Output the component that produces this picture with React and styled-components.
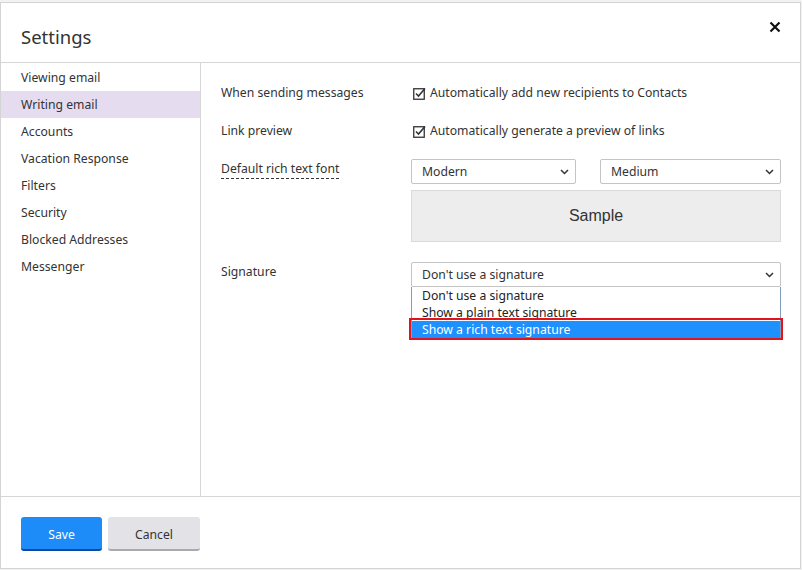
import React from "react";
import styled, { createGlobalStyle } from "styled-components";

const Global = createGlobalStyle`
  html, body { margin: 0; padding: 0; background: #f2f2f2; }
  body { font-family: "Noto Sans", "Open Sans", sans-serif; color: #333; }
  * { box-sizing: border-box; }
`;

const Dialog = styled.div`
  margin: 2px 0 0 0;
  width: 801px;
  height: 567px;
  background: #fff;
  border: 1px solid #d4d4d4;
  display: flex;
  flex-direction: column;
`;

const Header = styled.div`
  height: 60px;
  flex: none;
  display: flex;
  align-items: center;
  justify-content: space-between;
  padding: 0 15px 0 20px;
  border-bottom: 1px solid #d6d6d6;
`;

const Title = styled.h1`
  margin: 0;
  font-size: 18.5px;
  font-weight: 400;
  color: #333;
  padding-top: 7px;
`;

const Close = styled.button`
  border: 0;
  background: none;
  padding: 0;
  width: 20px;
  height: 20px;
  display: flex;
  align-items: center;
  justify-content: center;
  margin-top: -12px;
`;

const Body = styled.div`
  flex: 1;
  display: flex;
  min-height: 0;
`;

const Sidebar = styled.nav`
  width: 200px;
  flex: none;
  border-right: 1px solid #d6d6d6;
  padding-top: 1px;
`;

const NavItem = styled.div`
  height: 27px;
  line-height: 27px;
  padding-left: 20px;
  font-size: 12.2px;
  color: #333;
  background: ${(p) => (p.$active ? "#e6dcf0" : "transparent")};
`;

const Content = styled.div`
  flex: 1;
  padding: 20px 19px 0 20px;
  display: grid;
  grid-template-columns: 190px 370px;
  grid-auto-rows: min-content;
  align-content: start;
`;

const Label = styled.div`
  font-size: 12.2px;
  color: #333;
  line-height: 20px;
`;

const Dashed = styled.span`
  border-bottom: 1px dashed #333;
  padding-bottom: 1px;
`;

const Field = styled.div`
  padding-bottom: ${(p) => p.$pb || 0}px;
`;

const Check = styled.label`
  display: flex;
  align-items: center;
  gap: 4px;
  font-size: 12.2px;
  line-height: 20px;
  color: #333;
  padding-left: 2px;
`;

const SelectRow = styled.div`
  display: grid;
  grid-template-columns: 165px 181px;
  column-gap: 24px;
`;

const Select = styled.div`
  height: 25px;
  border: 1px solid #c4c4c4;
  border-radius: 2px;
  display: flex;
  align-items: center;
  justify-content: space-between;
  padding: 0 6px 0 10px;
  font-size: 12.2px;
  color: #333;
  background: #fff;
`;

const Sample = styled.div`
  margin-top: 6px;
  height: 52px;
  background: #ededed;
  border: 1px solid #dadada;
  display: flex;
  align-items: center;
  justify-content: center;
  font-family: "Liberation Sans", Arial, sans-serif;
  font-size: 16px;
  color: #333;
`;

const DropWrap = styled.div`
  position: relative;
`;

const List = styled.div`
  position: absolute;
  left: 0;
  right: 0;
  top: 25px;
  border: 1px solid #7f9db9;
  border-top: 0;
  background: #fff;
`;

const Option = styled.div`
  height: 17px;
  line-height: 17px;
  padding-left: 10px;
  font-size: 12.2px;
  color: ${(p) => (p.$sel ? "#fff" : "#222")};
  background: ${(p) => (p.$sel ? "#1e90ff" : "transparent")};
  position: relative;
`;

const Highlight = styled.div`
  position: absolute;
  left: -3px;
  right: -3px;
  top: -3px;
  bottom: -2px;
  border: 2px solid #e0141e;
  pointer-events: none;
`;

const Footer = styled.div`
  height: 72px;
  flex: none;
  border-top: 1px solid #d6d6d6;
  display: flex;
  align-items: center;
  gap: 6px;
  padding: 3px 0 0 20px;
`;

const Button = styled.button`
  height: 34px;
  width: ${(p) => p.$w}px;
  border: 0;
  border-radius: 3px;
  border-bottom: 2px solid ${(p) => (p.$primary ? "#0b4aa0" : "#a9a9b0")};
  background: ${(p) => (p.$primary ? "#1d8cf8" : "#e2e2e7")};
  color: ${(p) => (p.$primary ? "#fff" : "#333")};
  font-family: "Noto Sans", "Open Sans", sans-serif;
  font-size: 12.2px;
  padding: 2px 0 0;
`;

const Chevron = () => (
  <svg width="9" height="6" viewBox="0 0 9 6">
    <path d="M1 1l3.5 3.5L8 1" fill="none" stroke="#333" strokeWidth="1.5" />
  </svg>
);

const CheckIcon = () => (
  <svg width="13" height="13" viewBox="0 0 13 13">
    <rect x="0.75" y="1.75" width="10.5" height="10.5" fill="none" stroke="#333" strokeWidth="1.3" />
    <path d="M3 6.5l2.5 2.5L12 1.5" fill="none" stroke="#333" strokeWidth="1.6" />
  </svg>
);

export default function App() {
  const nav = [
    "Viewing email",
    "Writing email",
    "Accounts",
    "Vacation Response",
    "Filters",
    "Security",
    "Blocked Addresses",
    "Messenger",
  ];
  return (
    <>
      <Global />
      <Dialog>
        <Header>
          <Title>Settings</Title>
          <Close aria-label="Close">
            <svg width="12" height="12" viewBox="0 0 12 12">
              <path d="M1.5 1.5l9 9M10.5 1.5l-9 9" stroke="#111" strokeWidth="2.2" />
            </svg>
          </Close>
        </Header>
        <Body>
          <Sidebar>
            {nav.map((n) => (
              <NavItem key={n} $active={n === "Writing email"}>
                {n}
              </NavItem>
            ))}
          </Sidebar>
          <Content>
            <Label>When sending messages</Label>
            <Field $pb={18}>
              <Check>
                <CheckIcon />
                Automatically add new recipients to Contacts
              </Check>
            </Field>
            <Label>Link preview</Label>
            <Field $pb={18}>
              <Check>
                <CheckIcon />
                Automatically generate a preview of links
              </Check>
            </Field>
            <Label>
              <Dashed>Default rich text font</Dashed>
            </Label>
            <Field $pb={20}>
              <SelectRow>
                <Select>
                  Modern <Chevron />
                </Select>
                <Select>
                  Medium <Chevron />
                </Select>
              </SelectRow>
              <Sample>Sample</Sample>
            </Field>
            <Label>Signature</Label>
            <Field>
              <DropWrap>
                <Select>
                  Don't use a signature <Chevron />
                </Select>
                <List>
                  <Option>Don't use a signature</Option>
                  <Option>Show a plain text signature</Option>
                  <Option $sel>
                    Show a rich text signature
                    <Highlight />
                  </Option>
                </List>
              </DropWrap>
            </Field>
          </Content>
        </Body>
        <Footer>
          <Button $primary $w={81}>Save</Button>
          <Button $w={92}>Cancel</Button>
        </Footer>
      </Dialog>
    </>
  );
}
